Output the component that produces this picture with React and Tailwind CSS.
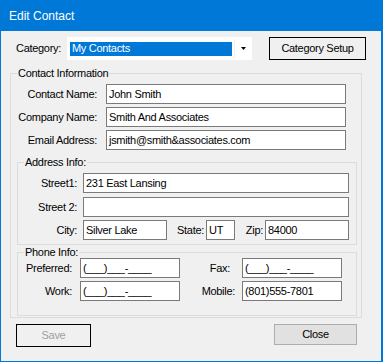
import React from "react";

function Field({ className, value }) {
    return (
        <div className={"h-[20px] bg-white border border-[#7A7A7A] pl-[2px] flex items-center whitespace-nowrap overflow-hidden " + className}>
            {value}
        </div>
    )
}

export default function App() {
    return (
        <div className="w-[383px] h-[362px] bg-white font-['Liberation_Sans',Arial,sans-serif] text-[11px] tracking-[-0.3px] text-black leading-none">
            <div className="h-full flex flex-col bg-[#F0F0F0] border-l border-r-2 border-b border-[#0078D7]">
                <div className="h-[31px] shrink-0 bg-[#0078D7] text-white text-[12px] tracking-normal pl-[8px] flex items-center">Edit Contact</div>

                {/* category */}
                <div className="mt-[6px] ml-[15px] flex items-center h-[23px]">
                    <div className="w-[51px]">Category:</div>
                    <div className="w-[185px] h-[23px] bg-white flex items-center">
                        <div className="ml-[3px] w-[162px] h-[14px] bg-[#0078D7] text-white pl-[2px] flex items-center">My Contacts</div>
                        <div className="ml-[2px] w-px h-[19px] bg-[#F0F0F0]"></div>
                        <div className="flex-1 flex items-center justify-center">
                            <svg width="5" height="3" viewBox="0 0 5 3"><polygon points="0,0 5,0 2.5,3" fill="#000" /></svg>
                        </div>
                    </div>
                    <button className="ml-[17px] w-[97px] h-[23px] border border-black bg-[#F0F0F0] text-[11px]">Category Setup</button>
                </div>

                {/* contact info group */}
                <fieldset className="mt-[7px] ml-[9px] w-[352px] border border-[#DCDCDC] mb-0">
                    <legend className="ml-[6px] px-[1px] leading-[13px]">Contact Information</legend>
                    <div className="mt-[4px] flex flex-col gap-[3px]">
                        <div className="flex items-center">
                            <div className="w-[86px] text-right">Contact Name:</div>
                            <Field className="ml-[9px] w-[240px]" value="John Smith" />
                        </div>
                        <div className="flex items-center">
                            <div className="w-[86px] text-right">Company Name:</div>
                            <Field className="ml-[9px] w-[240px]" value="Smith And Associates" />
                        </div>
                        <div className="flex items-center">
                            <div className="w-[86px] text-right">Email Address:</div>
                            <Field className="ml-[9px] w-[240px]" value="jsmith@smith&associates.com" />
                        </div>
                    </div>

                    <fieldset className="mt-[6px] ml-[6px] w-[340px] border border-[#DCDCDC] pb-[4px]">
                        <legend className="ml-[6px] px-[1px] leading-[13px]">Address Info:</legend>
                        <div className="mt-[4px] flex items-center">
                            <div className="w-[59px] text-right">Street1:</div>
                            <Field className="ml-[6px] w-[266px]" value="231 East Lansing" />
                        </div>
                        <div className="mt-[4px] flex items-center">
                            <div className="w-[59px] text-right">Street 2:</div>
                            <Field className="ml-[6px] w-[266px]" value="" />
                        </div>
                        <div className="mt-[3px] flex items-center">
                            <div className="w-[59px] text-right">City:</div>
                            <Field className="ml-[6px] w-[84px]" value="Silver Lake" />
                            <div className="w-[37px] text-right">State:</div>
                            <Field className="ml-[2px] w-[29px]" value="UT" />
                            <div className="w-[28px] text-right">Zip:</div>
                            <Field className="ml-[2px] w-[84px]" value="84000" />
                        </div>
                    </fieldset>

                    <fieldset className="mt-[1px] mb-[1px] ml-[6px] w-[340px] border border-[#DCDCDC] pb-[14px]">
                        <legend className="ml-[6px] px-[1px] leading-[13px]">Phone Info:</legend>
                        <div className="-mt-px flex items-center">
                            <div className="w-[54px] text-right">Preferred:</div>
                            <Field className="ml-[8px] w-[100px]" value="(___)___-____" />
                            <div className="w-[62px] text-right pr-[12px]">Fax:</div>
                            <Field className="w-[100px]" value="(___)___-____" />
                        </div>
                        <div className="mt-[3px] flex items-center">
                            <div className="w-[54px] text-right">Work:</div>
                            <Field className="ml-[8px] w-[100px]" value="(___)___-____" />
                            <div className="w-[62px] text-right pr-[7px]">Mobile:</div>
                            <Field className="w-[100px]" value="(801)555-7801" />
                        </div>
                    </fieldset>
                </fieldset>

                {/* buttons */}
                <div className="mt-[6px] ml-[15px] flex items-start">
                    <button className="w-[75px] h-[23px] border border-black bg-[#F0F0F0] text-[#A0A0A0] text-[11px]">Save</button>
                    <button className="ml-[183px] w-[83px] h-[21px] border border-[#ADADAD] bg-[#E1E1E1] text-[11px]">Close</button>
                </div>
            </div>
        </div>
    )
}
